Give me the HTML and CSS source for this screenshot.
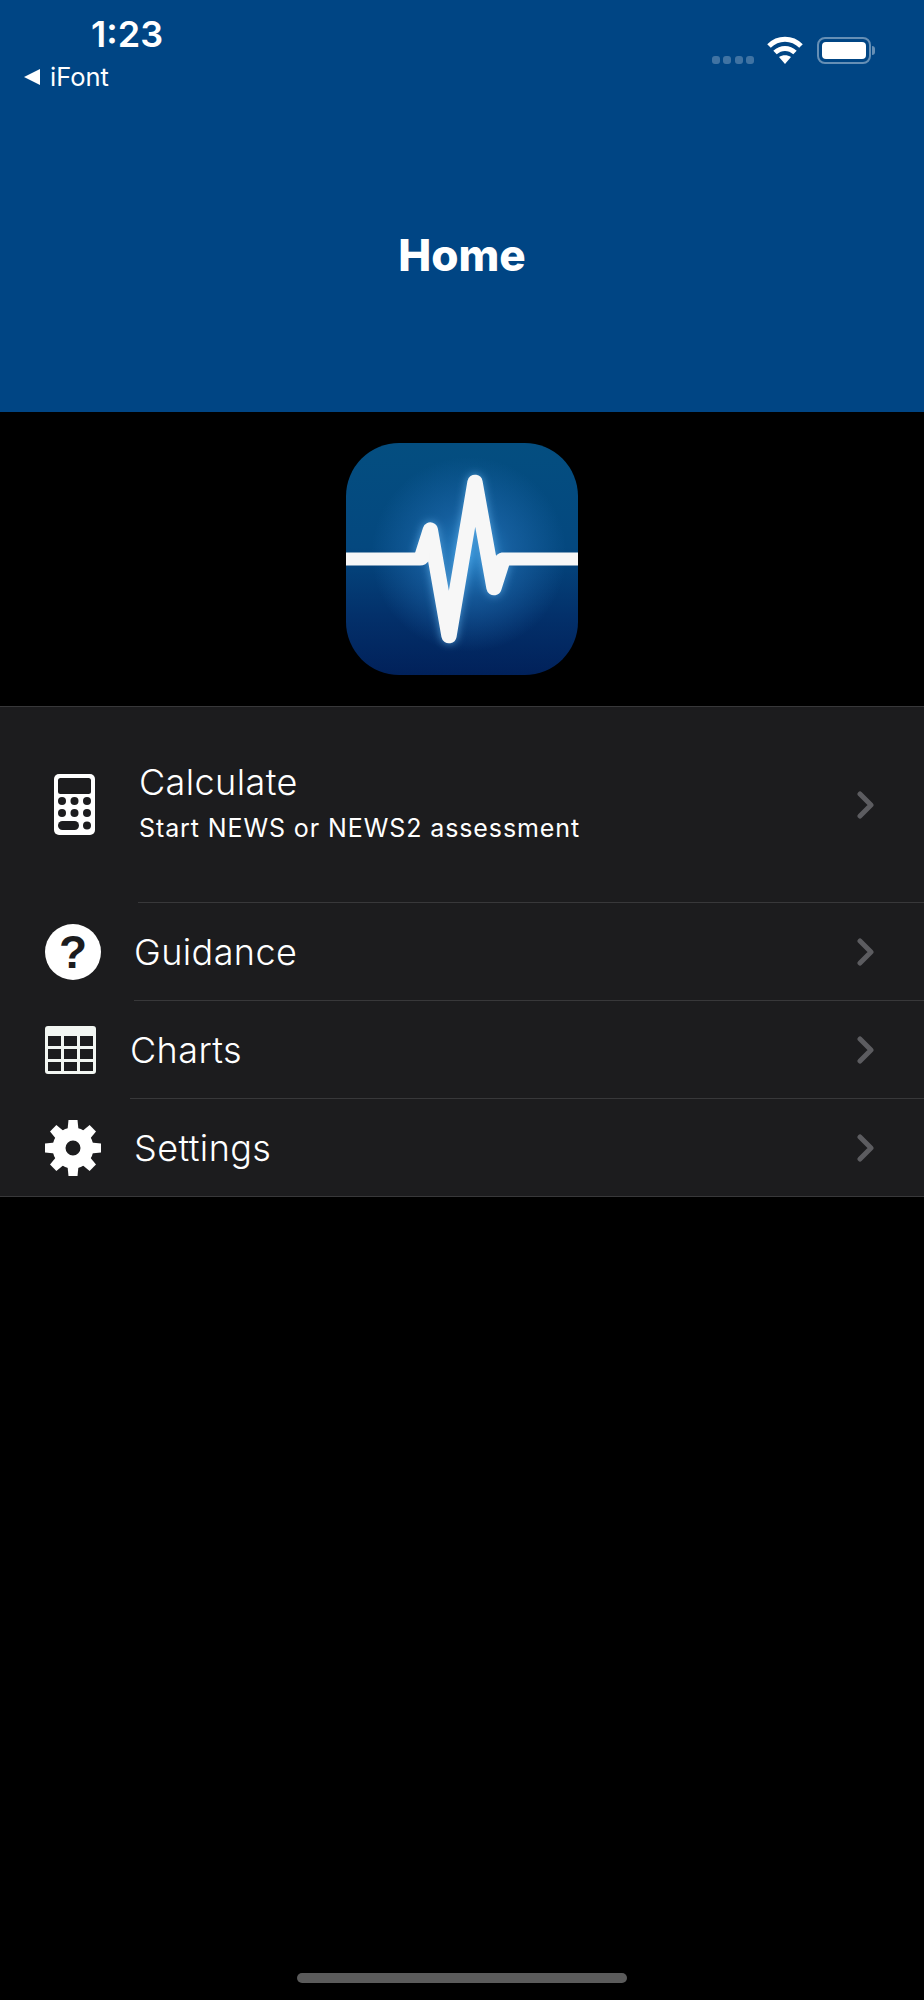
FILE: index.html
```html
<!DOCTYPE html>
<html lang="en">
<head>
    <meta charset="UTF-8">
    <meta name="viewport" content="width=device-width, initial-scale=1.0">
    <title>Home</title>
    <link rel="stylesheet" href="styles.css">
</head>
<body>
    <header class="header">
        <div class="status">
            <div class="status-left">
                <div class="time">1:23</div>
                <div class="back">
                    <svg class="back-arrow" viewBox="0 0 16 16"><path d="M0 8 L16 0 V16 Z" fill="#fff"/></svg>
                    <span>iFont</span>
                </div>
            </div>
            <div class="status-right">
                <div class="signal"><i></i><i></i><i></i><i></i></div>
                <svg class="wifi" viewBox="0 0 36 28">
                    <path d="M2 10 C11 1 25 1 34 10" fill="none" stroke="#fff" stroke-width="5"/>
                    <path d="M8 16.500 C14 11 22 11 28 16.500" fill="none" stroke="#fff" stroke-width="5"/>
                    <path d="M12 21 C15.500 18.500 20.500 18.500 24 21 L18 28 Z" fill="#fff"/>
                </svg>
                <div class="battery"><div class="battery-fill"></div></div>
                <div class="battery-tip"></div>
            </div>
        </div>
        <h1 class="title">Home</h1>
    </header>

    <div class="logo-wrap">
        <svg class="logo" viewBox="0 0 696 696">
            <defs>
                <linearGradient id="logoBg" x1="0" y1="0" x2="0" y2="1">
                    <stop offset="0" stop-color="#044e80"/>
                    <stop offset="0.45" stop-color="#04487f"/>
                    <stop offset="0.75" stop-color="#03306a"/>
                    <stop offset="1" stop-color="#01215a"/>
                </linearGradient>
                <radialGradient id="logoGlow" cx="0.53" cy="0.48" r="0.42">
                    <stop offset="0" stop-color="#2d8bd0" stop-opacity="1"/>
                    <stop offset="0.45" stop-color="#1f6bb0" stop-opacity="0.6"/>
                    <stop offset="1" stop-color="#1f6bb0" stop-opacity="0"/>
                </radialGradient>
                <filter id="blur" x="-20%" y="-20%" width="140%" height="140%">
                    <feGaussianBlur stdDeviation="13"/>
                </filter>
                <clipPath id="logoClip"><rect width="696" height="696" rx="160"/></clipPath>
            </defs>
            <g clip-path="url(#logoClip)">
                <rect width="696" height="696" fill="url(#logoBg)"/>
                <rect width="696" height="696" fill="url(#logoGlow)"/>
                <path d="M228 340 L253 261 L309 578 L387 118 L444 434 L470 352" fill="none" stroke="#62b4ee" stroke-opacity="0.7" stroke-width="48" stroke-linejoin="round" filter="url(#blur)"/>
                <path d="M0 348 H696" fill="none" stroke="#4fa6e6" stroke-opacity="0.5" stroke-width="42" filter="url(#blur)"/>
                <path d="M228 340 L253 261 L309 578 L387 118 L444 434 L470 352" fill="none" stroke="#f7f7f7" stroke-width="46" stroke-linejoin="round"/>
                <path d="M0 328.500 H250 V351 Q240 367.500 222 367.500 H0 Z" fill="#f7f7f7"/>
                <path d="M696 328.500 H467 Q452 332 446 345 V367.500 H696 Z" fill="#f7f7f7"/>
            </g>
        </svg>
    </div>

    <nav class="list">
        <a class="row row-calc">
            <div class="row-icon">
                <svg class="icon-calc" viewBox="0 0 41 61">
                    <rect width="41" height="61" rx="5" fill="#fff"/>
                    <rect x="4" y="4" width="33" height="16" rx="2.500" fill="#1c1c1e"/>
                    <g fill="#1c1c1e">
                        <circle cx="8" cy="27" r="4"/><circle cx="20.500" cy="27" r="4"/><circle cx="33" cy="27" r="4"/>
                        <circle cx="8" cy="39" r="4"/><circle cx="20.500" cy="39" r="4"/><circle cx="33" cy="39" r="4"/>
                        <rect x="4" y="47" width="21" height="9" rx="4.500"/><circle cx="33" cy="51.500" r="4"/>
                    </g>
                </svg>
            </div>
            <div class="row-body">
                <div class="row-text">
                    <div class="row-title">Calculate</div>
                    <div class="row-sub">Start NEWS or NEWS2 assessment</div>
                </div>
                <svg class="chevron" viewBox="0 0 18 28"><path d="M3 3 L14 14 L3 25" fill="none" stroke="#5c5c60" stroke-width="5" stroke-linecap="round" stroke-linejoin="round"/></svg>
            </div>
        </a>
        <a class="row row-guidance">
            <div class="row-icon">
                <svg class="icon-help" viewBox="0 0 56 56">
                    <circle cx="28" cy="28" r="28" fill="#fff"/>
                    <text x="28" y="44" text-anchor="middle" class="help-mark">?</text>
                </svg>
            </div>
            <div class="row-body">
                <div class="row-title">Guidance</div>
                <svg class="chevron" viewBox="0 0 18 28"><path d="M3 3 L14 14 L3 25" fill="none" stroke="#5c5c60" stroke-width="5" stroke-linecap="round" stroke-linejoin="round"/></svg>
            </div>
        </a>
        <a class="row row-charts">
            <div class="row-icon">
                <svg class="icon-table" viewBox="0 0 51 48">
                    <rect width="51" height="48" rx="3" fill="#f2f6f2"/>
                    <g fill="#1c1c1e">
                        <rect x="3" y="10" width="13" height="10"/><rect x="19" y="10" width="13" height="10"/><rect x="35" y="10" width="13" height="10"/>
                        <rect x="3" y="23" width="13" height="10"/><rect x="19" y="23" width="13" height="10"/><rect x="35" y="23" width="13" height="10"/>
                        <rect x="3" y="36" width="13" height="9"/><rect x="19" y="36" width="13" height="9"/><rect x="35" y="36" width="13" height="9"/>
                    </g>
                </svg>
            </div>
            <div class="row-body">
                <div class="row-title">Charts</div>
                <svg class="chevron" viewBox="0 0 18 28"><path d="M3 3 L14 14 L3 25" fill="none" stroke="#5c5c60" stroke-width="5" stroke-linecap="round" stroke-linejoin="round"/></svg>
            </div>
        </a>
        <a class="row row-settings">
            <div class="row-icon">
                <svg class="icon-gear" viewBox="0 0 56 56">
                    <circle cx="28" cy="28" r="14" fill="none" stroke="#fff" stroke-width="13"/>
                    <g fill="#fff">
                        <path id="tooth" d="M22.500 10 L23.500 0 H32.500 L33.500 10 Z"/>
                        <use href="#tooth" transform="rotate(45 28 28)"/>
                        <use href="#tooth" transform="rotate(90 28 28)"/>
                        <use href="#tooth" transform="rotate(135 28 28)"/>
                        <use href="#tooth" transform="rotate(180 28 28)"/>
                        <use href="#tooth" transform="rotate(225 28 28)"/>
                        <use href="#tooth" transform="rotate(270 28 28)"/>
                        <use href="#tooth" transform="rotate(315 28 28)"/>
                    </g>
                </svg>
            </div>
            <div class="row-body">
                <div class="row-title">Settings</div>
                <svg class="chevron" viewBox="0 0 18 28"><path d="M3 3 L14 14 L3 25" fill="none" stroke="#5c5c60" stroke-width="5" stroke-linecap="round" stroke-linejoin="round"/></svg>
            </div>
        </a>
    </nav>

    <div class="home-indicator"></div>
</body>
</html>
```

FILE: styles.css
```css
* {
    box-sizing: border-box;
}
body {
    font-family: Inter, "Liberation Sans", sans-serif;
    margin: 0;
    padding: 0;
    display: flex;
    flex-direction: column;
    min-height: 2000px;
    background-color: #000;
    color: #fff;
}
.header {
    height: 412px;
    background-color: #004584;
}
.status {
    display: flex;
    justify-content: space-between;
    align-items: flex-start;
    height: 96px;
}
.status-left {
    padding: 16px 0 0 24px;
}
.time {
    font-size: 36px;
    line-height: 36px;
    font-weight: 600;
    margin-left: 67px;
}
.back {
    display: flex;
    align-items: center;
    gap: 10px;
    margin-top: 10px;
    font-size: 25.5px;
    line-height: 30px;
}
.back-arrow {
    width: 16px;
    height: 16px;
}
.status-right {
    display: flex;
    align-items: center;
    padding: 36px 49px 0 0;
}
.signal {
    display: flex;
    gap: 3.5px;
    margin: 20px 13px 0 0;
}
.signal i {
    width: 8px;
    height: 8px;
    border-radius: 3px;
    background-color: rgba(255, 255, 255, 0.25);
}
.wifi {
    width: 36px;
    height: 28px;
    margin-right: 14px;
}
.battery {
    width: 54px;
    height: 27px;
    padding: 3px;
    border: 2px solid rgba(255, 255, 255, 0.4);
    border-radius: 8px;
}
.battery-fill {
    height: 100%;
    background-color: #fff;
    border-radius: 4px;
}
.battery-tip {
    width: 3px;
    height: 9px;
    margin-left: 1px;
    border-radius: 0 3px 3px 0;
    background-color: rgba(255, 255, 255, 0.4);
}
.title {
    margin: 0;
    padding-top: 139px;
    text-align: center;
    font-size: 44px;
    line-height: 40px;
    font-weight: 800;
}
.logo-wrap {
    display: flex;
    justify-content: center;
    padding: 31px 0;
}
.logo {
    display: block;
    width: 232px;
    height: 232px;
}
.list {
    background-color: #1c1c1e;
    border-top: 1px solid #38383a;
    border-bottom: 1px solid #38383a;
}
.row {
    display: flex;
    height: 98px;
}
.row-calc {
    height: 196px;
}
.row-icon {
    display: flex;
    align-items: center;
    flex-shrink: 0;
}
.row-calc .row-icon {
    width: 138px;
    padding: 0 0 1px 54px;
}
.row-guidance .row-icon {
    width: 134px;
    padding: 0 0 0 45px;
}
.row-charts .row-icon {
    width: 130px;
    padding: 0 0 0 45px;
}
.row-settings {
    height: 97px;
}
.row-settings .row-icon {
    width: 134px;
    padding: 0 0 0 45px;
}
.row-body {
    flex: 1;
    display: flex;
    align-items: center;
    justify-content: space-between;
    padding-right: 49px;
    border-bottom: 1px solid #38383a;
}
.row-calc .row-body {
    padding-left: 1px;
}
.row-settings .row-body {
    border-bottom: none;
}
.row-text {
    padding-bottom: 5px;
}
.row-title {
    font-size: 36px;
    line-height: 44px;
    font-weight: 350;
    letter-spacing: 0.4px;
}
.row-sub {
    margin-top: 8px;
    font-size: 25px;
    line-height: 32px;
    letter-spacing: 0.9px;
}
.chevron {
    width: 18px;
    height: 28px;
}
.icon-calc {
    width: 41px;
    height: 61px;
}
.icon-help {
    width: 56px;
    height: 56px;
}
.help-mark {
    font-family: "Liberation Sans", sans-serif;
    font-size: 46px;
    font-weight: 700;
    fill: #1c1c1e;
}
.icon-table {
    width: 51px;
    height: 48px;
}
.icon-gear {
    width: 56px;
    height: 56px;
}
.home-indicator {
    width: 330px;
    height: 10px;
    margin: auto auto 17px;
    border-radius: 5px;
    background-color: #5b5b5b;
}
```
